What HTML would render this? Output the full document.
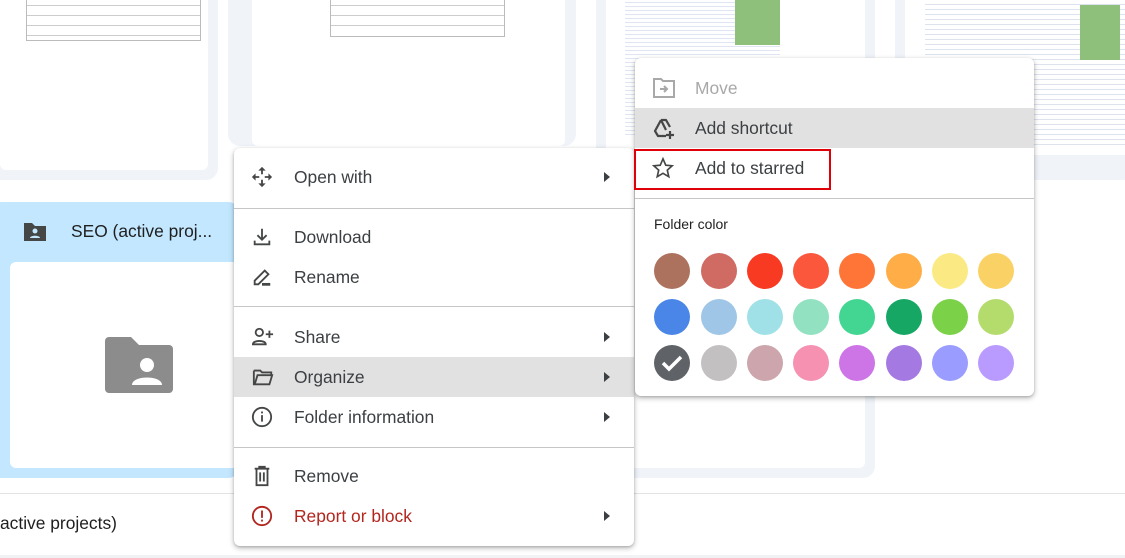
<!DOCTYPE html>
<html><head><meta charset="utf-8"><style>
*{margin:0;padding:0;box-sizing:border-box}
body{width:1125px;height:558px;overflow:hidden;background:#fff;position:relative;font-family:"Liberation Sans",Arial,sans-serif;color:#3c4043}
.abs{position:absolute}
.card{position:absolute;background:#f0f4f9;border-radius:12px}
.inner{position:absolute;background:#fff;border-radius:6px}
.menu{position:absolute;background:#fff;border-radius:6px;box-shadow:0 2px 6px rgba(0,0,0,.28),0 1px 2px rgba(0,0,0,.15)}
.it{position:absolute;left:0;right:0;height:40px;font-size:17.4px;line-height:40px}
.it .t{position:absolute;left:60px;top:0}
.it svg.ic{position:absolute;left:17px;top:9px}
.arr{position:absolute;right:24px;top:15px;width:0;height:0;border-left:6px solid #3c4043;border-top:5px solid transparent;border-bottom:5px solid transparent}
.sep{position:absolute;left:0;right:0;height:1px;background:#c4c7c5}
.dot{position:absolute;width:36px;height:36px;border-radius:50%}
.tbl{position:absolute;border:1px solid #bbb}
.tbl div{height:10px;border-bottom:1px solid #ccc}
</style></head><body>
<!-- top cards -->
<div class="card" style="left:-10px;top:-20px;width:228px;height:200px"></div>
<div class="inner" style="left:0;top:-10px;width:208px;height:180px"></div>
<div class="tbl" style="left:26px;top:-5px;width:175px;height:46px"><div></div><div></div><div></div><div></div></div>
<div class="card" style="left:228px;top:-20px;width:348px;height:166px"></div>
<div class="inner" style="left:252px;top:-10px;width:313px;height:156px"></div>
<div class="tbl" style="left:330px;top:-5px;width:175px;height:42px"><div></div><div></div><div></div></div>
<div class="card" style="left:596px;top:-20px;width:279px;height:498px"></div>
<div class="inner" style="left:606px;top:-10px;width:259px;height:478px"></div>
<div class="abs" style="left:625px;top:-5px;width:155px;height:140px;background:repeating-linear-gradient(#fff 0 3px,#dfe5f2 3px 4px)"></div>
<div class="abs" style="left:735px;top:0;width:45px;height:45px;background:#8ec07c"></div>
<div class="card" style="left:895px;top:-20px;width:240px;height:200px"></div>
<div class="inner" style="left:905px;top:-10px;width:230px;height:165px"></div>
<div class="abs" style="left:925px;top:0;width:200px;height:145px;background:repeating-linear-gradient(#fff 0 4px,#dde3ee 4px 5px)"></div>
<div class="abs" style="left:1080px;top:5px;width:40px;height:55px;background:#8ec07c"></div>
<!-- selected card -->
<div class="card" style="left:-10px;top:202px;width:250px;height:276px;background:#c2e7ff"></div>
<div class="inner" style="left:10px;top:262px;width:230px;height:206px;background:#fff"></div>
<svg class="abs" style="left:22px;top:221px" width="26" height="22" viewBox="0 0 26 22"><path d="M2 2h8l3 3h11v15H2z" fill="#444746"/><circle cx="13" cy="10" r="2.5" fill="#c2e7ff"/><path d="M8 17c0-3 10-3 10 0z" fill="#c2e7ff"/></svg>
<div class="abs" style="left:71px;top:221px;font-size:17.4px;color:#1f1f1f">SEO (active proj...</div>
<svg class="abs" style="left:105px;top:337px" width="68" height="56" viewBox="0 0 68 56"><path d="M4 0h22l8 8h30a4 4 0 0 1 4 4v40a4 4 0 0 1-4 4H4a4 4 0 0 1-4-4V4a4 4 0 0 1 4-4z" fill="#8c8c8c"/><circle cx="42" cy="28" r="7" fill="#fff"/><path d="M27 48c0-10 30-10 30 0z" fill="#fff"/></svg>
<div class="abs" style="left:0;top:493px;width:1125px;height:1px;background:#e3e3e3"></div>
<div class="abs" style="left:0;top:555px;width:1125px;height:3px;background:#f0f2f4"></div>
<div class="abs" style="left:0;top:513px;font-size:17.4px;color:#1f1f1f">active projects)</div>

<!-- main menu -->
<div class="menu" style="left:234px;top:148px;width:400px;height:398px">
 <div class="it" style="top:9px"><svg class="ic" width="22" height="22" viewBox="0 0 24 24" fill="#444746"><path d="M12 1l4 4h-3v4h-2V5H8zM12 23l-4-4h3v-4h2v4h3zM1 12l4-4v3h4v2H5v3zM23 12l-4 4v-3h-4v-2h4V8z"/></svg><span class="t">Open with</span><i class="arr"></i></div>
 <div class="sep" style="top:60px"></div>
 <div class="it" style="top:69px"><svg class="ic" width="22" height="22" viewBox="0 0 24 24" fill="none" stroke="#444746" stroke-width="2"><path d="M12 3v12M7 10l5 5 5-5M4 16v4h16v-4"/></svg><span class="t">Download</span></div>
 <div class="it" style="top:109px"><svg class="ic" width="22" height="22" viewBox="0 0 24 24" fill="none" stroke="#444746" stroke-width="2"><path d="M4 20v-4L15 5l4 4L8 20z"/><path d="M12 20h9" stroke-width="3"/></svg><span class="t">Rename</span></div>
 <div class="sep" style="top:158px"></div>
 <div class="it" style="top:169px"><svg class="ic" width="24" height="22" viewBox="0 0 26 24" fill="none" stroke="#444746" stroke-width="2"><circle cx="9" cy="7" r="4"/><path d="M2 20c0-5 14-5 14 0zM20 5v8M16 9h8"/></svg><span class="t">Share</span><i class="arr"></i></div>
 <div class="it" style="top:209px;background:#e1e1e1"><svg class="ic" width="24" height="22" viewBox="0 0 24 24" fill="none" stroke="#444746" stroke-width="2"><path d="M2 5h7l2 2h10v3M2 5v15h17l3-10H6L3 20"/></svg><span class="t">Organize</span><i class="arr"></i></div>
 <div class="it" style="top:249px"><svg class="ic" width="22" height="22" viewBox="0 0 24 24" fill="none" stroke="#444746" stroke-width="2"><circle cx="12" cy="12" r="10"/><path d="M12 10v7M12 6v2"/></svg><span class="t">Folder information</span><i class="arr"></i></div>
 <div class="sep" style="top:299px"></div>
 <div class="it" style="top:308px"><svg class="ic" width="22" height="22" viewBox="0 0 24 24" fill="none" stroke="#444746" stroke-width="2"><path d="M4 4h16M9 4V2h6v2M6 4v18h12V4M10 8v10M14 8v10"/></svg><span class="t">Remove</span></div>
 <div class="it" style="top:348px;color:#b3261e"><svg class="ic" width="22" height="22" viewBox="0 0 24 24" fill="none" stroke="#b3261e" stroke-width="2"><circle cx="12" cy="12" r="10"/><path d="M12 6v8M12 16v2"/></svg><span class="t">Report or block</span><i class="arr"></i></div>
</div>

<!-- submenu -->
<div class="menu" style="left:635px;top:58px;width:399px;height:338px">
 <div class="it" style="top:10px;color:#a8a8a8"><svg class="ic" width="24" height="22" viewBox="0 0 24 22" fill="none" stroke="#a8a8a8" stroke-width="2"><path d="M2 2h7l2 2h11v16H2z"/><path d="M8 12h7M12 9l3 3-3 3"/></svg><span class="t">Move</span></div>
 <div class="it" style="top:50px;background:#e1e1e1"><svg class="ic" width="24" height="24" viewBox="0 0 24 24" fill="none" stroke="#444746" stroke-width="2.2" stroke-linejoin="round"><path d="M9 3h5l4 7M9 3L3 14l3 5h8M9 3l5 10"/><path d="M18 14v8M14 18h8"/></svg><span class="t">Add shortcut</span></div>
 <div class="it" style="top:90px"><svg class="ic" width="22" height="22" viewBox="0 0 24 24" fill="none" stroke="#444746" stroke-width="1.8"><path d="M12 2l3 7 7 .6-5.3 4.7 1.6 7.2L12 17.8 5.7 21.5l1.6-7.2L2 9.6 9 9z"/></svg><span class="t">Add to starred</span></div>
 <div class="abs" style="left:-1px;top:91px;width:197px;height:41px;border:2.5px solid #e0000a"></div>
 <div class="sep" style="top:140px"></div>
 <div class="abs" style="left:19px;top:158px;font-size:14px;color:#1f1f1f">Folder color</div>
</div>
<div class="dot" style="left:654px;top:253px;background:#ac725e"></div>
<div class="dot" style="left:701px;top:253px;background:#d06b64"></div>
<div class="dot" style="left:747px;top:253px;background:#f83a22"></div>
<div class="dot" style="left:793px;top:253px;background:#fa573c"></div>
<div class="dot" style="left:839px;top:253px;background:#ff7537"></div>
<div class="dot" style="left:886px;top:253px;background:#ffad46"></div>
<div class="dot" style="left:932px;top:253px;background:#fbe983"></div>
<div class="dot" style="left:978px;top:253px;background:#fad165"></div>
<div class="dot" style="left:654px;top:299px;background:#4986e7"></div>
<div class="dot" style="left:701px;top:299px;background:#9fc6e7"></div>
<div class="dot" style="left:747px;top:299px;background:#9fe1e7"></div>
<div class="dot" style="left:793px;top:299px;background:#92e1c0"></div>
<div class="dot" style="left:839px;top:299px;background:#42d692"></div>
<div class="dot" style="left:886px;top:299px;background:#16a765"></div>
<div class="dot" style="left:932px;top:299px;background:#7bd148"></div>
<div class="dot" style="left:978px;top:299px;background:#b3dc6c"></div>
<div class="dot" style="left:654px;top:345px;background:#5f6368"><svg width="36" height="36" viewBox="0 0 36 36"><path d="M9 18l6 6 12-12" fill="none" stroke="#fff" stroke-width="3.5"/></svg></div>
<div class="dot" style="left:701px;top:345px;background:#c2c0c0"></div>
<div class="dot" style="left:747px;top:345px;background:#cca6ac"></div>
<div class="dot" style="left:793px;top:345px;background:#f691b2"></div>
<div class="dot" style="left:839px;top:345px;background:#cd74e6"></div>
<div class="dot" style="left:886px;top:345px;background:#a47ae2"></div>
<div class="dot" style="left:932px;top:345px;background:#9a9cff"></div>
<div class="dot" style="left:978px;top:345px;background:#b99aff"></div>
</body></html>
